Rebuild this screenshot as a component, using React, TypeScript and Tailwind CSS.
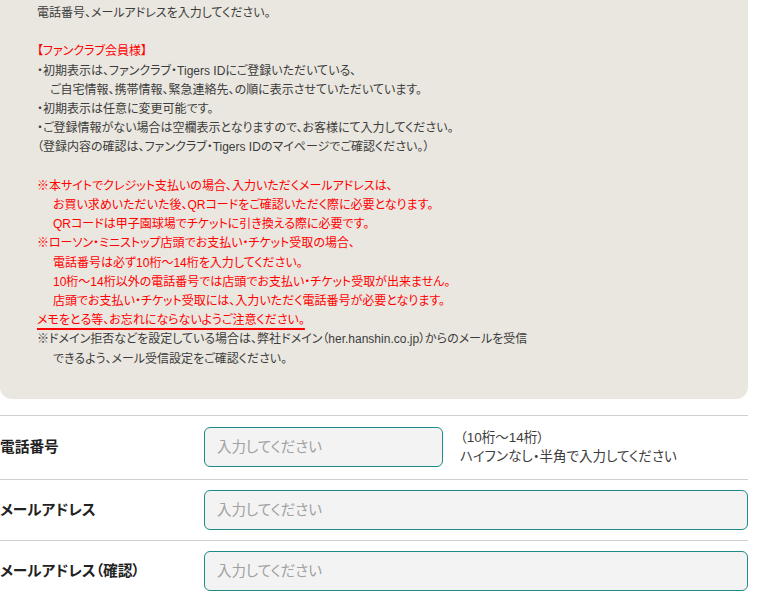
import React from "react";

const font = {
  fontFamily: '"Liberation Sans", "Noto Sans CJK JP", sans-serif',
};

export default function App() {
  return (
    <div
      className="w-[760px] h-[594px] overflow-hidden bg-white text-[#3c3c3c] [font-feature-settings:'palt']"
      style={font}
    >
      <div className="w-[748px] bg-[#eae7e0] rounded-b-[12px] pl-[37px] pt-[4px] pb-[30px] text-[12px] leading-[19.2px]">
        <p>電話番号、メールアドレスを入力してください。</p>
        <p>&nbsp;</p>
        <p className="text-[#ff0000]">【ファンクラブ会員様】</p>
        <p>・初期表示は、ファンクラブ・Tigers IDにご登録いただいている、</p>
        <p className="pl-[13px]">ご自宅情報、携帯情報、緊急連絡先、の順に表示させていただいています。</p>
        <p>・初期表示は任意に変更可能です。</p>
        <p>・ご登録情報がない場合は空欄表示となりますので、お客様にて入力してください。</p>
        <p>（登録内容の確認は、ファンクラブ・Tigers IDのマイページでご確認ください。）</p>
        <p>&nbsp;</p>
        <div className="text-[#ff0000]">
          <p>※本サイトでクレジット支払いの場合、入力いただくメールアドレスは、</p>
          <p className="pl-[16px]">お買い求めいただいた後、QRコードをご確認いただく際に必要となります。</p>
          <p className="pl-[16px]">QRコードは甲子園球場でチケットに引き換える際に必要です。</p>
          <p>※ローソン・ミニストップ店頭でお支払い・チケット受取の場合、</p>
          <p className="pl-[16px]">電話番号は必ず10桁〜14桁を入力してください。</p>
          <p className="pl-[16px]">10桁〜14桁以外の電話番号では店頭でお支払い・チケット受取が出来ません。</p>
          <p className="pl-[16px]">店頭でお支払い・チケット受取には、入力いただく電話番号が必要となります。</p>
          <p>
            <span className="underline decoration-[#ff0000] decoration-[1.5px] underline-offset-[4px]">
              メモをとる等、お忘れにならないようご注意ください。
            </span>
          </p>
        </div>
        <p>※ドメイン拒否などを設定している場合は、弊社ドメイン（her.hanshin.co.jp）からのメールを受信</p>
        <p className="pl-[16px]">できるよう、メール受信設定をご確認ください。</p>
      </div>

      <div className="w-[748px] mt-[16px] border-t border-[#d0d0d0]">
        <div className="flex items-center py-[11.5px] border-b border-[#d0d0d0]">
          <div className="w-[204px] shrink-0 text-[14.7px] font-bold text-[#222]">電話番号</div>
          <input
            className="w-[239px] h-[40px] rounded-[6px] border border-[#1e8a8a] bg-[#f3f3f3] px-[12px] text-[14.5px] placeholder:text-[#a0a0a0] outline-none"
            placeholder="入力してください"
            style={font}
          />
          <div className="ml-[17px] text-[13.5px] leading-[19.5px] text-[#3c3c3c]">
            <p>（10桁〜14桁）</p>
            <p>ハイフンなし・半角で入力してください</p>
          </div>
        </div>
        <div className="flex items-center py-[10px] border-b border-[#d0d0d0]">
          <div className="w-[204px] shrink-0 text-[14.7px] font-bold text-[#222]">メールアドレス</div>
          <input
            className="flex-1 h-[40px] rounded-[6px] border border-[#1e8a8a] bg-[#f3f3f3] px-[12px] text-[14.5px] placeholder:text-[#a0a0a0] outline-none"
            placeholder="入力してください"
            style={font}
          />
        </div>
        <div className="flex items-center py-[10px]">
          <div className="w-[204px] shrink-0 text-[14.7px] font-bold text-[#222]">メールアドレス（確認）</div>
          <input
            className="flex-1 h-[40px] rounded-[6px] border border-[#1e8a8a] bg-[#f3f3f3] px-[12px] text-[14.5px] placeholder:text-[#a0a0a0] outline-none"
            placeholder="入力してください"
            style={font}
          />
        </div>
      </div>
    </div>
  );
}
